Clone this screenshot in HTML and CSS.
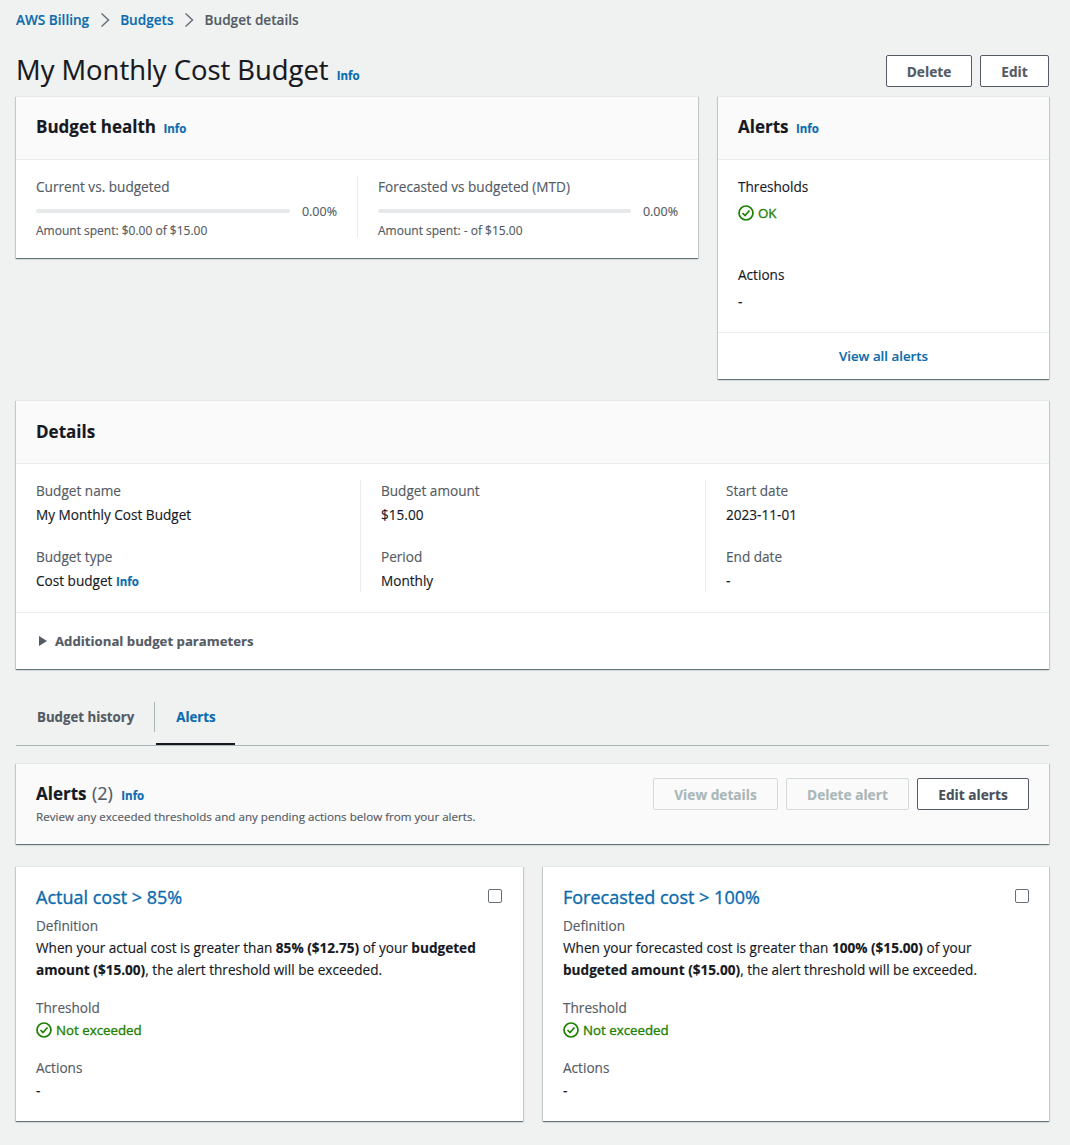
FILE: index.html
```html
<!DOCTYPE html>
<html>
    <head>
        <meta charset="utf-8">
        <title>Budget details</title>
        <link rel="stylesheet" href="styles.css">
    </head>
    <body>
        <nav class="crumbs">
            <a href="#">AWS Billing</a>
            <svg class="crumb-sep" viewBox="0 0 10 16"><path d="M1.5 1.5 8.5 8l-7 6.5"/></svg>
            <a href="#">Budgets</a>
            <svg class="crumb-sep" viewBox="0 0 10 16"><path d="M1.5 1.5 8.5 8l-7 6.5"/></svg>
            <span>Budget details</span>
        </nav>

        <header class="page-head">
            <h1>My Monthly Cost Budget <a class="info" href="#">Info</a></h1>
            <div class="btn-row">
                <button class="btn btn-delete">Delete</button>
                <button class="btn btn-edit">Edit</button>
            </div>
        </header>

        <div class="top-grid">
            <section class="card health">
                <div class="card-head">
                    <h2>Budget health <a class="info" href="#">Info</a></h2>
                </div>
                <div class="health-body">
                    <div class="meter">
                        <div class="meter-label">Current vs. budgeted</div>
                        <div class="meter-row">
                            <div class="meter-bar"></div>
                            <span>0.00%</span>
                        </div>
                        <div class="meter-note">Amount spent: $0.00 of $15.00</div>
                    </div>
                    <div class="meter">
                        <div class="meter-label">Forecasted vs budgeted (MTD)</div>
                        <div class="meter-row">
                            <div class="meter-bar"></div>
                            <span>0.00%</span>
                        </div>
                        <div class="meter-note">Amount spent: - of $15.00</div>
                    </div>
                </div>
            </section>

            <section class="card side-alerts">
                <div class="card-head">
                    <h2>Alerts <a class="info" href="#">Info</a></h2>
                </div>
                <div class="side-body">
                    <div class="side-label">Thresholds</div>
                    <div class="status side-status">
                        <svg class="check" viewBox="0 0 16 16"><circle cx="8" cy="8" r="7"/><path d="M4.5 8 7 10.5 11.5 5.5"/></svg>
                        OK
                    </div>
                    <div class="side-label side-actions">Actions</div>
                    <div class="side-dash">-</div>
                </div>
                <div class="side-foot"><a href="#">View all alerts</a></div>
            </section>
        </div>

        <section class="card details">
            <div class="card-head">
                <h2>Details</h2>
            </div>
            <div class="details-grid">
                <div class="details-col">
                    <div class="kv"><div class="k">Budget name</div><div class="v">My Monthly Cost Budget</div></div>
                    <div class="kv"><div class="k">Budget type</div><div class="v">Cost budget <a class="info" href="#">Info</a></div></div>
                </div>
                <div class="details-col">
                    <div class="kv"><div class="k">Budget amount</div><div class="v">$15.00</div></div>
                    <div class="kv"><div class="k">Period</div><div class="v">Monthly</div></div>
                </div>
                <div class="details-col">
                    <div class="kv"><div class="k">Start date</div><div class="v">2023-11-01</div></div>
                    <div class="kv"><div class="k">End date</div><div class="v">-</div></div>
                </div>
            </div>
            <div class="expander">
                <svg class="caret" viewBox="0 0 10 12"><path d="M1 1v10l8-5z"/></svg>
                Additional budget parameters
            </div>
        </section>

        <div class="tabs">
            <a class="tab" href="#">Budget history</a>
            <a class="tab tab-active" href="#">Alerts</a>
        </div>

        <section class="card alerts-head">
            <div>
                <h2>Alerts <span class="count">(2)</span> <a class="info" href="#">Info</a></h2>
                <p>Review any exceeded thresholds and any pending actions below from your alerts.</p>
            </div>
            <div class="btn-row">
                <button class="btn btn-off btn-view">View details</button>
                <button class="btn btn-off btn-del">Delete alert</button>
                <button class="btn btn-alerts">Edit alerts</button>
            </div>
        </section>

        <div class="alert-grid">
            <section class="card alert-card">
                <div class="alert-title">
                    <a href="#">Actual cost &gt; 85%</a>
                    <span class="checkbox"></span>
                </div>
                <div class="k">Definition</div>
                <p class="def">When your actual cost is greater than <b>85% ($12.75)</b> of your <b>budgeted amount ($15.00)</b>, the alert threshold will be exceeded.</p>
                <div class="k">Threshold</div>
                <div class="status">
                    <svg class="check" viewBox="0 0 16 16"><circle cx="8" cy="8" r="7"/><path d="M4.5 8 7 10.5 11.5 5.5"/></svg>
                    Not exceeded
                </div>
                <div class="k card-actions">Actions</div>
                <div class="card-dash">-</div>
            </section>
            <section class="card alert-card">
                <div class="alert-title">
                    <a href="#">Forecasted cost &gt; 100%</a>
                    <span class="checkbox"></span>
                </div>
                <div class="k">Definition</div>
                <p class="def">When your forecasted cost is greater than <b>100% ($15.00)</b> of your <b>budgeted amount ($15.00)</b>, the alert threshold will be exceeded.</p>
                <div class="k">Threshold</div>
                <div class="status">
                    <svg class="check" viewBox="0 0 16 16"><circle cx="8" cy="8" r="7"/><path d="M4.5 8 7 10.5 11.5 5.5"/></svg>
                    Not exceeded
                </div>
                <div class="k card-actions">Actions</div>
                <div class="card-dash">-</div>
            </section>
        </div>
    </body>
</html>
```

FILE: styles.css
```css
body {
    margin: 0;
    padding: 0 21px 24px 16px;
    background: #f0f2f2;
    color: #16191f;
    font-family: "Open Sans", "Liberation Sans", sans-serif;
    font-size: 13.6px;
    line-height: 22px;
    -webkit-text-stroke: 0.15px;
}

a {
    color: #0b6bad;
    text-decoration: none;
}

h1, h2, p {
    margin: 0;
}

.crumbs {
    display: flex;
    align-items: center;
    height: 40px;
    font-weight: 600;
    color: #545b64;
}

.crumb-sep {
    width: 10px;
    height: 16px;
    margin: 0 10.5px;
}

.crumb-sep path {
    fill: none;
    stroke: #687078;
    stroke-width: 1.5;
}

.page-head {
    display: flex;
    justify-content: space-between;
    align-items: flex-start;
    height: 56px;
}

h1 {
    margin-top: 11px;
    font-size: 27.4px;
    line-height: 38px;
    font-weight: 400;
}

.info {
    font-size: 11.5px;
    font-weight: 700;
}

h1 .info {
    margin-left: 1px;
}

h2 .info {
    margin-left: 3px;
}

.btn-row {
    display: flex;
    gap: 8px;
}

.btn {
    height: 32px;
    margin-top: 15px;
    padding: 0;
    border: 1px solid #545b64;
    border-radius: 2px;
    background: #fff;
    color: #545b64;
    font: 700 13.7px "Open Sans", "Liberation Sans", sans-serif;
}

.btn-delete { width: 86px; }
.btn-edit { width: 69px; }
.btn-view { width: 125px; }
.btn-del { width: 123px; }
.btn-alerts { width: 112px; color: #4a5059; }

.btn-off {
    border-color: #d5dbdb;
    color: #aab7b8;
    background: #fafafa;
}

.card {
    box-sizing: border-box;
    background: #fff;
    border-top: 1px solid #e6e9e9;
    box-shadow: 0 1px 1px 0 rgba(0, 28, 36, 0.45), 1px 1px 1px 0 rgba(0, 28, 36, 0.12), -1px 1px 1px 0 rgba(0, 28, 36, 0.12);
}

.card-head {
    height: 62px;
    padding: 0 20px;
    display: flex;
    align-items: center;
    background: #fafafa;
    border-bottom: 1px solid #eaeded;
}

h2 {
    font-size: 17px;
    line-height: 24px;
    font-weight: 700;
}

.top-grid {
    display: grid;
    grid-template-columns: 682px 331px;
    column-gap: 20px;
    align-items: start;
}

.health {
    height: 162px;
}

.health-body {
    display: grid;
    grid-template-columns: 1fr 1fr;
    margin-top: 16px;
    padding: 0 20px;
}

.meter {
    height: 62px;
}

.meter + .meter {
    padding-left: 20px;
    border-left: 1px solid #eaeded;
}

.meter:first-child {
    padding-right: 20px;
}

.meter-label {
    color: #545b64;
}

.meter-row {
    display: flex;
    align-items: center;
    gap: 12px;
    margin-top: 4px;
    height: 20px;
    color: #545b64;
    font-size: 12.5px;
}

.meter-bar {
    flex: 1;
    height: 4px;
    margin-top: -2px;
    border-radius: 2px;
    background: #e6e9e9;
}

.meter-note {
    color: #545b64;
    font-size: 12px;
    line-height: 20px;
    margin-top: -1px;
}

.side-alerts {
    height: 283px;
}

.side-body {
    box-sizing: border-box;
    height: 173px;
    padding: 16px 20px 0;
    border-bottom: 1px solid #eaeded;
}

.status {
    display: flex;
    align-items: center;
    gap: 4px;
    color: #1d8102;
    font-size: 13.3px;
    -webkit-text-stroke: 0.35px;
}

.side-status {
    margin-top: 4px;
}

.side-actions {
    margin-top: 40px;
}

.side-dash {
    margin-top: 5px;
}

.check {
    width: 16px;
    height: 16px;
}

.check circle, .check path {
    fill: none;
    stroke: #1d8102;
    stroke-width: 1.7;
}

.side-foot {
    text-align: center;
    line-height: 46px;
    font-size: 13.3px;
    font-weight: 600;
}

.details {
    margin-top: 21px;
    height: 269px;
}

.details-grid {
    display: grid;
    grid-template-columns: 344px 345px 1fr;
    box-sizing: border-box;
    height: 149px;
    padding: 16px 0 0;
    border-bottom: 1px solid #eaeded;
}

.details-col {
    height: 112px;
    padding-left: 20px;
    border-left: 1px solid #eaeded;
}

.details-col:first-child {
    border-left: 0;
}

.kv {
    height: 66px;
}

.k {
    color: #545b64;
}

.v {
    margin-top: 2px;
}

.expander {
    display: flex;
    align-items: center;
    height: 56px;
    padding-left: 22px;
    color: #545b64;
    font-size: 13.2px;
    font-weight: 700;
}

.caret {
    width: 10px;
    height: 12px;
    margin-right: 7px;
}

.caret path {
    fill: #545b64;
}

.tabs {
    display: flex;
    box-sizing: border-box;
    height: 76px;
    margin-top: 1px;
    padding-top: 32px;
    border-bottom: 1px solid #aab7b8;
    font-size: 13.25px;
    font-weight: 700;
}

.tab {
    box-sizing: border-box;
    height: 43px;
    line-height: 30px;
    color: #545b64;
}

.tabs .tab:first-child {
    width: 139px;
    height: 30px;
    padding-left: 21px;
    border-right: 1px solid #aab7b8;
}

.tabs .tab-active {
    width: 79px;
    margin-left: 1px;
    padding-left: 1px;
    text-align: center;
    color: #0b6bad;
    border-bottom: 2px solid #16191f;
}

.alerts-head {
    display: flex;
    justify-content: space-between;
    height: 81px;
    margin-top: 17px;
    padding: 0 20px;
    background: #fafafa;
}

.alerts-head h2 {
    margin-top: 17px;
}

.count {
    margin-left: 1px;
    font-size: 18px;
    font-weight: 400;
    color: #545b64;
}

.alerts-head .info {
    margin-left: 4px;
}

.alerts-head p {
    margin-top: 0;
    color: #545b64;
    font-size: 11.6px;
    line-height: 18px;
}

.alerts-head .btn {
    margin-top: 14px;
}

.alert-grid {
    display: grid;
    grid-template-columns: 507px 506px;
    column-gap: 20px;
    margin-top: 22px;
}

.alert-card {
    height: 255px;
    padding: 18px 20px 0;
}

.alert-title {
    display: flex;
    justify-content: space-between;
    align-items: center;
    height: 24px;
    margin-bottom: 6px;
    font-size: 18px;
    -webkit-text-stroke: 0.35px;
}

.checkbox {
    width: 12px;
    height: 12px;
    margin-bottom: 2px;
    border: 1px solid #687078;
    border-radius: 2px;
    background: #fff;
    -webkit-text-stroke: 0;
}

.alert-card:first-child .checkbox {
    margin-right: 1px;
}

.def {
    margin-bottom: 16px;
}

.card-actions {
    margin-top: 16px;
}

.card-dash {
    margin-top: 1px;
}
```
